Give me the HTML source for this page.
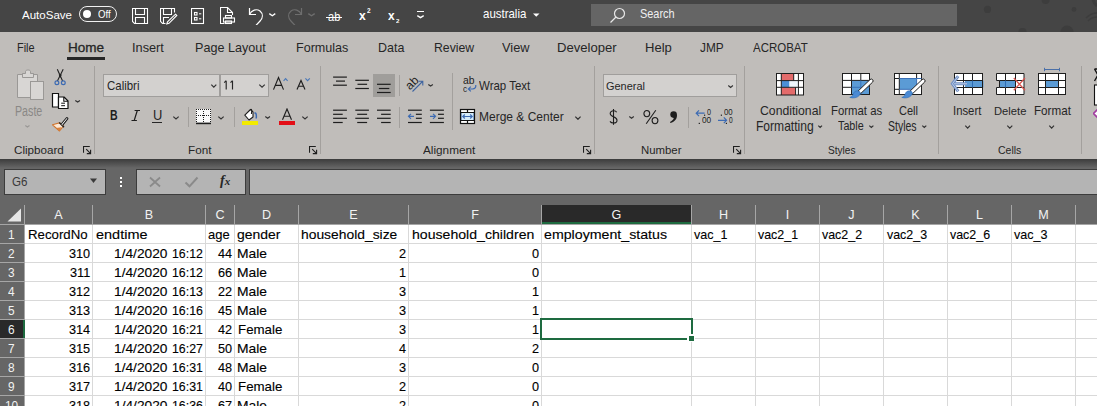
<!DOCTYPE html>
<html><head><meta charset="utf-8"><style>
html,body{margin:0;padding:0}
body{width:1097px;height:406px;overflow:hidden;position:relative;background:#666;font-family:"Liberation Sans", sans-serif}
.b{position:absolute}
.t{position:absolute;white-space:nowrap;line-height:1.15;transform-origin:0 0}
</style></head><body>
<div class="b" style="left:0px;top:0px;width:1097px;height:32px;background:#454545"></div>
<svg class="b" style="left:960px;top:0px;" width="137" height="32" viewBox="0 0 137 32"><g fill="#3d3d3d"><circle cx="27.5" cy="9.4" r="3.6"/><circle cx="85.6" cy="0" r="4"/><circle cx="114" cy="9.4" r="2.4"/>
<circle cx="107" cy="32" r="6.5"/><circle cx="62.5" cy="32" r="4"/></g>
<path d="M126,18C130,14 134,13 137,13M128,21C131,18 134,17 137,17" fill="none" stroke="#3d3d3d" stroke-width="1.5"/>
<path d="M133,0C134,3 136,5 137,6" fill="none" stroke="#3d3d3d" stroke-width="3"/></svg>
<div class="t" style="left:22.00px;top:9.58px;font-size:11.13px;line-height:11.13px;font-weight:normal;color:#ffffff;transform:scaleX(1.037);">AutoSave</div>
<div class="b" style="left:79px;top:6px;width:38px;height:16px;border:1.2px solid #f0f0f0;border-radius:9px;box-sizing:border-box"></div>
<div class="b" style="left:83px;top:10px;width:8px;height:8px;background:#fff;border-radius:50%"></div>
<div class="t" style="left:98.00px;top:9.49px;font-size:10.88px;line-height:10.88px;font-weight:normal;color:#ffffff;transform:scaleX(0.884);">Off</div>
<svg class="b" style="left:132px;top:8px;" width="17" height="17" viewBox="0 0 17 17"><g fill="none" stroke="#fff" stroke-width="1.1"><path d="M0.5,0.5H15.5V15.5H2.5L0.5,13.5Z"/><path d="M3.5,0.5V6.5H12.5V0.5"/><path d="M3.5,15.5V9.5H12.5V15.5"/></g></svg>
<svg class="b" style="left:160px;top:8px;" width="18" height="17" viewBox="0 0 18 17"><g fill="none" stroke="#fff" stroke-width="1.1"><path d="M14.5,4.5V0.5H0.5V13.5L2.5,15.5H5.5"/><path d="M3.5,0.5V6.5H11.5V0.5"/><path d="M3.5,15.5V9.5H9"/></g><path d="M15.5,6.2L16.8,7.5L9,15.3L6.8,16L7.5,13.8Z" fill="none" stroke="#fff" stroke-width="1.1"/></svg>
<svg class="b" style="left:191px;top:8px;" width="14" height="17" viewBox="0 0 14 17"><g fill="none" stroke="#fff" stroke-width="1.1"><rect x="0.5" y="0.5" width="12" height="15"/><rect x="3.5" y="4.5" width="2.5" height="2.5"/><rect x="3.5" y="9.5" width="2.5" height="2.5"/></g><rect x="8" y="5.3" width="2.3" height="1" fill="#fff"/><rect x="8" y="10.3" width="2.3" height="1" fill="#fff"/></svg>
<svg class="b" style="left:220px;top:7px;" width="17" height="18" viewBox="0 0 17 18"><g fill="none" stroke="#fff" stroke-width="1.1"><path d="M4.5,16.5H0.5V0.5H7.5L12.5,5.5V8"/><path d="M7.5,0.5V5.5H12.5"/><rect x="5.5" y="8.5" width="6" height="2.5"/><rect x="3.5" y="11" width="11" height="4"/><rect x="5.5" y="14" width="6" height="2.5"/></g></svg>
<svg class="b" style="left:247px;top:7px;" width="18" height="18" viewBox="0 0 18 18"><g fill="none" stroke="#fff" stroke-width="1.2"><path d="M2.5,1V7.5H9"/><path d="M2.6,7.3C4.5,3 9.5,1.5 13,4 C16.5,7 15.5,11 13.5,13.5L7.5,20"/></g></svg>
<svg class="b" style="left:268.4px;top:11.8px;" width="8.600000000000023" height="5.199999999999999" viewBox="0 0 8.600000000000023 5.199999999999999"><path d="M1.3,1.6L4.300000000000011,3.7999999999999994L7.300000000000023,1.6" fill="none" stroke="#fff" stroke-width="1.32"/></svg>
<svg class="b" style="left:287px;top:7px;" width="18" height="18" viewBox="0 0 18 18"><g fill="none" stroke="#6e6e6e" stroke-width="1.2" transform="translate(17,0) scale(-1,1)"><path d="M2.5,1V7.5H9"/><path d="M2.6,7.3C4.5,3 9.5,1.5 13,4 C16.5,7 15.5,11 13.5,13.5L7.5,20"/></g></svg>
<svg class="b" style="left:307px;top:11.8px;" width="9" height="5.199999999999999" viewBox="0 0 9 5.199999999999999"><path d="M1.3,1.6L4.5,3.7999999999999994L7.7,1.6" fill="none" stroke="#6e6e6e" stroke-width="1.32"/></svg>
<div class="t" style="left:327.70px;top:10.00px;font-size:13.20px;line-height:13.20px;font-weight:normal;color:#ffffff;transform:scaleX(0.840);">ab</div>
<div class="b" style="left:326px;top:17px;width:16px;height:1px;background:#fff"></div>
<div class="t" style="left:359.30px;top:8.80px;font-size:13.58px;line-height:13.58px;font-weight:bold;color:#ffffff;transform:scaleX(0.889);">x</div>
<div class="t" style="left:367.00px;top:7.81px;font-size:6.29px;line-height:6.29px;font-weight:bold;color:#ffffff;transform:scaleX(1.032);">2</div>
<div class="t" style="left:388.40px;top:8.80px;font-size:13.58px;line-height:13.58px;font-weight:bold;color:#ffffff;transform:scaleX(0.875);">x</div>
<div class="t" style="left:395.80px;top:19.47px;font-size:5.86px;line-height:5.86px;font-weight:bold;color:#ffffff;transform:scaleX(1.046);">2</div>
<div class="b" style="left:417px;top:11px;width:7px;height:1px;background:#fff"></div>
<svg class="b" style="left:416px;top:13.8px;" width="9" height="5.0" viewBox="0 0 9 5.0"><path d="M1.3,1.6L4.5,3.6L7.7,1.6" fill="none" stroke="#fff" stroke-width="1.32"/></svg>
<div class="t" style="left:483.20px;top:9.45px;font-size:11.97px;line-height:11.97px;font-weight:normal;color:#ffffff;transform:scaleX(0.958);">australia</div>
<svg class="b" style="left:533px;top:13px;" width="7" height="5" viewBox="0 0 7 5"><path d="M0,0.5H6.5L3.25,3.8Z" fill="#fff"/></svg>
<div class="b" style="left:591px;top:4px;width:366px;height:22px;background:#656565"></div>
<svg class="b" style="left:609px;top:7px;" width="17" height="17" viewBox="0 0 17 17"><g fill="none" stroke="#e8e8e8" stroke-width="1.2"><circle cx="10.5" cy="6.5" r="5"/><path d="M7,10L1.5,15.5"/></g></svg>
<div class="t" style="left:639.80px;top:9.45px;font-size:11.97px;line-height:11.97px;font-weight:normal;color:#f0f0f0;transform:scaleX(0.912);">Search</div>
<div class="b" style="left:0px;top:32px;width:1097px;height:127px;background:#c0bdba"></div>
<div class="t" style="left:16.60px;top:41.57px;font-size:12.80px;line-height:12.80px;font-weight:normal;color:#262626;transform:scaleX(0.854);">File</div>
<div class="t" style="left:67.60px;top:41.57px;font-size:12.80px;line-height:12.80px;font-weight:normal;color:#262626;transform:scaleX(1.056);-webkit-text-stroke:0.3px #262626">Home</div>
<div class="t" style="left:132.00px;top:41.57px;font-size:12.80px;line-height:12.80px;font-weight:normal;color:#262626;transform:scaleX(0.997);">Insert</div>
<div class="t" style="left:195.30px;top:41.57px;font-size:12.80px;line-height:12.80px;font-weight:normal;color:#262626;transform:scaleX(0.984);">Page Layout</div>
<div class="t" style="left:296.00px;top:41.57px;font-size:12.80px;line-height:12.80px;font-weight:normal;color:#262626;transform:scaleX(0.982);">Formulas</div>
<div class="t" style="left:378.30px;top:41.57px;font-size:12.80px;line-height:12.80px;font-weight:normal;color:#262626;transform:scaleX(0.975);">Data</div>
<div class="t" style="left:433.70px;top:41.57px;font-size:12.80px;line-height:12.80px;font-weight:normal;color:#262626;transform:scaleX(0.958);">Review</div>
<div class="t" style="left:501.50px;top:41.57px;font-size:12.80px;line-height:12.80px;font-weight:normal;color:#262626;transform:scaleX(0.999);">View</div>
<div class="t" style="left:557.00px;top:41.57px;font-size:12.80px;line-height:12.80px;font-weight:normal;color:#262626;transform:scaleX(1.023);">Developer</div>
<div class="t" style="left:645.00px;top:41.57px;font-size:12.80px;line-height:12.80px;font-weight:normal;color:#262626;transform:scaleX(1.019);">Help</div>
<div class="t" style="left:699.80px;top:41.57px;font-size:12.80px;line-height:12.80px;font-weight:normal;color:#262626;transform:scaleX(0.926);">JMP</div>
<div class="t" style="left:753.00px;top:41.57px;font-size:12.80px;line-height:12.80px;font-weight:normal;color:#262626;transform:scaleX(0.898);">ACROBAT</div>
<div class="b" style="left:67px;top:57px;width:38px;height:3px;background:#262626"></div>
<div class="b" style="left:94px;top:66px;width:1px;height:88px;background:#a3a09d"></div>
<div class="b" style="left:320px;top:66px;width:1px;height:88px;background:#a3a09d"></div>
<div class="b" style="left:594px;top:66px;width:1px;height:88px;background:#a3a09d"></div>
<div class="b" style="left:744px;top:66px;width:1px;height:88px;background:#a3a09d"></div>
<div class="b" style="left:938px;top:66px;width:1px;height:88px;background:#a3a09d"></div>
<div class="b" style="left:1081px;top:66px;width:1px;height:88px;background:#a3a09d"></div>
<div class="t" style="left:13.60px;top:144.56px;font-size:11.40px;line-height:11.40px;font-weight:normal;color:#262626;transform:scaleX(1.021);">Clipboard</div>
<svg class="b" style="left:83px;top:146px;" width="10" height="10" viewBox="0 0 10 10"><g fill="none" stroke="#1e1e1e" stroke-width="1.1"><path d="M0.5,6.8V0.5H6.8"/><path d="M3.2,3.2L7.4,7.4M7.6,3.8V7.6H3.8"/></g></svg>
<div class="t" style="left:187.60px;top:144.56px;font-size:11.40px;line-height:11.40px;font-weight:normal;color:#262626;transform:scaleX(1.026);">Font</div>
<svg class="b" style="left:309px;top:146px;" width="10" height="10" viewBox="0 0 10 10"><g fill="none" stroke="#1e1e1e" stroke-width="1.1"><path d="M0.5,6.8V0.5H6.8"/><path d="M3.2,3.2L7.4,7.4M7.6,3.8V7.6H3.8"/></g></svg>
<div class="t" style="left:423.40px;top:144.56px;font-size:11.40px;line-height:11.40px;font-weight:normal;color:#262626;transform:scaleX(1.032);">Alignment</div>
<svg class="b" style="left:583px;top:146px;" width="10" height="10" viewBox="0 0 10 10"><g fill="none" stroke="#1e1e1e" stroke-width="1.1"><path d="M0.5,6.8V0.5H6.8"/><path d="M3.2,3.2L7.4,7.4M7.6,3.8V7.6H3.8"/></g></svg>
<div class="t" style="left:641.40px;top:144.56px;font-size:11.40px;line-height:11.40px;font-weight:normal;color:#262626;transform:scaleX(0.999);">Number</div>
<svg class="b" style="left:733px;top:146px;" width="10" height="10" viewBox="0 0 10 10"><g fill="none" stroke="#1e1e1e" stroke-width="1.1"><path d="M0.5,6.8V0.5H6.8"/><path d="M3.2,3.2L7.4,7.4M7.6,3.8V7.6H3.8"/></g></svg>
<div class="t" style="left:827.70px;top:144.56px;font-size:11.40px;line-height:11.40px;font-weight:normal;color:#262626;transform:scaleX(0.888);">Styles</div>
<div class="t" style="left:998.30px;top:144.56px;font-size:11.40px;line-height:11.40px;font-weight:normal;color:#262626;transform:scaleX(0.923);">Cells</div>
<svg class="b" style="left:16px;top:69px;" width="30" height="32" viewBox="0 0 30 32"><g stroke="#9a9896" stroke-width="1" fill="#d8d6d4">
<path d="M1.5,5.5H6.5V4.5H17.5V5.5H21.5V28.5H1.5Z"/>
<path d="M6.5,8.5V4.5H9.5V2.5C9.5,0.5 14.5,0.5 14.5,2.5V4.5H17.5V8.5Z"/>
<rect x="14.5" y="12.5" width="13" height="18"/></g></svg>
<div class="t" style="left:14.60px;top:104.86px;font-size:13.71px;line-height:13.71px;font-weight:normal;color:#8a8886;transform:scaleX(0.779);">Paste</div>
<svg class="b" style="left:24.2px;top:124px;" width="6.800000000000001" height="4.400000000000006" viewBox="0 0 6.800000000000001 4.400000000000006"><path d="M1.3,1.6L3.4000000000000004,3.0000000000000058L5.500000000000001,1.6" fill="none" stroke="#9a9896" stroke-width="1.21"/></svg>
<svg class="b" style="left:54px;top:68px;" width="13" height="18" viewBox="0 0 13 18"><g fill="none" stroke-width="1.1"><path d="M3.3,1.2L8.6,13M9.2,1.2L3.4,13" stroke="#222"/>
<circle cx="2.9" cy="14.8" r="1.9" stroke="#3d6bb3" stroke-width="1.2"/><circle cx="9.3" cy="14.8" r="1.9" stroke="#3d6bb3" stroke-width="1.2"/></g>
<path d="M5.2,6.5L6.25,8.6L7.3,6.5" stroke="#222" stroke-width="1.2" fill="none"/></svg>
<svg class="b" style="left:51px;top:92px;" width="19" height="18" viewBox="0 0 19 18"><path d="M1.5,1.5H7.5V15H1.5Z" fill="#fff" stroke="#111" stroke-width="1.2"/>
<path d="M7.5,5H13L17,9V16.5H7.5Z" fill="#fff" stroke="#111" stroke-width="1.2" stroke-linejoin="round"/>
<path d="M12.8,5V9.2H17" fill="none" stroke="#111" stroke-width="1.1"/>
<path d="M10.2,11.2H14M10.2,13.7H14" stroke="#111" stroke-width="1"/></svg>
<svg class="b" style="left:74px;top:99.2px;" width="7.299999999999997" height="4.5" viewBox="0 0 7.299999999999997 4.5"><path d="M1.3,1.6L3.6499999999999986,3.1L5.999999999999997,1.6" fill="none" stroke="#333" stroke-width="1.21"/></svg>
<svg class="b" style="left:51px;top:115px;" width="18" height="18" viewBox="0 0 18 18"><path d="M1.5,9.8L8.8,7.8L12.5,11L8.5,16Z" fill="#fde9d6" stroke="#d0742c" stroke-width="1.1" stroke-linejoin="round"/>
<path d="M5,13L10.5,12.2L8.5,16Z" fill="#d8803c"/>
<path d="M8.2,7.6L13,12.2" stroke="#222" stroke-width="1.4"/>
<path d="M10.2,9L15.2,3C16,2 17.5,3.2 16.6,4.2L11.6,10.4" fill="#fff" stroke="#1e1e1e" stroke-width="1.1"/></svg>
<div class="b" style="left:103px;top:74px;width:117px;height:23px;background:#d3d1cf;border:1px solid #a09e9c;box-sizing:border-box"></div>
<div class="b" style="left:220px;top:74px;width:49px;height:23px;background:#d3d1cf;border:1px solid #a09e9c;box-sizing:border-box"></div>
<div class="t" style="left:107.00px;top:79.90px;font-size:12.38px;line-height:12.38px;font-weight:normal;color:#262626;transform:scaleX(0.926);">Calibri</div>
<svg class="b" style="left:209.7px;top:83px;" width="7.600000000000023" height="5.599999999999994" viewBox="0 0 7.600000000000023 5.599999999999994"><path d="M1.3,1.6L3.8000000000000114,4.199999999999994L6.300000000000023,1.6" fill="none" stroke="#333" stroke-width="1.21"/></svg>
<svg class="b" style="left:222px;top:79px;" width="14" height="12" viewBox="0 0 14 12"><path d="M4.2,1.7V10.6M2.2,3.6L4.2,1.7M10.5,1.7V10.6M8.5,3.6L10.5,1.7" fill="none" stroke="#262626" stroke-width="1.15"/></svg>
<svg class="b" style="left:258.4px;top:83px;" width="8.100000000000023" height="5.599999999999994" viewBox="0 0 8.100000000000023 5.599999999999994"><path d="M1.3,1.6L4.050000000000011,4.199999999999994L6.800000000000023,1.6" fill="none" stroke="#333" stroke-width="1.21"/></svg>
<svg class="b" style="left:270px;top:74px;" width="44" height="18" viewBox="0 0 44 18"><g fill="none" stroke="#1e1e1e" stroke-width="1.15" stroke-linejoin="miter">
<path d="M3.5,15.6L8.5,3.6L13.5,15.6M5.3,11.4H11.7"/><path d="M27,15.6L31,6.4L35,15.6M28.4,12.2H33.6"/></g>
<path d="M13.6,6.8L15.6,4.6L17.6,6.8" fill="none" stroke="#4a78b8" stroke-width="1.1"/>
<path d="M35.4,4.4L37.6,6.6L39.8,4.4" fill="none" stroke="#4a78b8" stroke-width="1.1"/></svg>
<div class="t" style="left:110.40px;top:108.72px;font-size:13.91px;line-height:13.91px;font-weight:bold;color:#1e1e1e;transform:scaleX(0.759);">B</div>
<svg class="b" style="left:130px;top:109px;" width="11" height="13" viewBox="0 0 11 13"><path d="M4.6,1.5H10M1.5,11.5H6.9M7.3,1.5L4.2,11.5" fill="none" stroke="#1e1e1e" stroke-width="1.2"/></svg>
<div class="t" style="left:152.50px;top:108.76px;font-size:13.71px;line-height:13.71px;font-weight:normal;color:#262626;transform:scaleX(0.942);">U</div>
<div class="b" style="left:152px;top:122px;width:10px;height:1px;background:#262626"></div>
<svg class="b" style="left:171.6px;top:114.7px;" width="8.0" height="5.3999999999999915" viewBox="0 0 8.0 5.3999999999999915"><path d="M1.3,1.6L4.0,3.9999999999999916L6.7,1.6" fill="none" stroke="#333" stroke-width="1.21"/></svg>
<div class="b" style="left:188px;top:107px;width:1px;height:20px;background:#a3a09d"></div>
<svg class="b" style="left:195px;top:108px;" width="17" height="17" viewBox="0 0 17 17"><rect x="1" y="1" width="15" height="14" fill="#fafafa"/><g fill="#1e1e1e"><rect x="1" y="1" width="1" height="1"/><rect x="1" y="7" width="1" height="1"/><rect x="3" y="1" width="1" height="1"/><rect x="3" y="7" width="1" height="1"/><rect x="5" y="1" width="1" height="1"/><rect x="5" y="7" width="1" height="1"/><rect x="7" y="1" width="1" height="1"/><rect x="7" y="7" width="1" height="1"/><rect x="9" y="1" width="1" height="1"/><rect x="9" y="7" width="1" height="1"/><rect x="11" y="1" width="1" height="1"/><rect x="11" y="7" width="1" height="1"/><rect x="13" y="1" width="1" height="1"/><rect x="13" y="7" width="1" height="1"/><rect x="15" y="1" width="1" height="1"/><rect x="15" y="7" width="1" height="1"/><rect x="1" y="3" width="1" height="1"/><rect x="15" y="3" width="1" height="1"/><rect x="8" y="3" width="1" height="1"/><rect x="1" y="5" width="1" height="1"/><rect x="15" y="5" width="1" height="1"/><rect x="8" y="5" width="1" height="1"/><rect x="1" y="7" width="1" height="1"/><rect x="15" y="7" width="1" height="1"/><rect x="8" y="7" width="1" height="1"/><rect x="1" y="9" width="1" height="1"/><rect x="15" y="9" width="1" height="1"/><rect x="8" y="9" width="1" height="1"/><rect x="1" y="11" width="1" height="1"/><rect x="15" y="11" width="1" height="1"/><rect x="8" y="11" width="1" height="1"/><rect x="1" y="13" width="1" height="1"/><rect x="15" y="13" width="1" height="1"/><rect x="8" y="13" width="1" height="1"/></g>
<rect x="1" y="14.6" width="15" height="1.6" fill="#1e1e1e"/></svg>
<svg class="b" style="left:217.3px;top:114.7px;" width="8.0" height="5.3999999999999915" viewBox="0 0 8.0 5.3999999999999915"><path d="M1.3,1.6L4.0,3.9999999999999916L6.7,1.6" fill="none" stroke="#333" stroke-width="1.21"/></svg>
<div class="b" style="left:234px;top:107px;width:1px;height:20px;background:#a3a09d"></div>
<svg class="b" style="left:242px;top:107px;" width="17" height="14" viewBox="0 0 17 14"><path d="M2.8,8.2L8.5,2.5L11,5L11,10L7,13L2.8,8.2Z" fill="#fff" stroke="#1e1e1e" stroke-width="1.1" stroke-linejoin="round"/>
<path d="M8.3,2.8C9.2,1.8 10.3,2.4 9.4,7" fill="none" stroke="#1e1e1e" stroke-width="1.1"/>
<path d="M12.5,6.5C13.5,5.2 14.8,6.4 14.2,11.5" fill="none" stroke="#3d6bb3" stroke-width="1.5"/></svg>
<div class="b" style="left:242px;top:120.8px;width:16px;height:4.2px;background:#f2ea00"></div>
<svg class="b" style="left:263.9px;top:114.8px;" width="7.300000000000011" height="4.700000000000003" viewBox="0 0 7.300000000000011 4.700000000000003"><path d="M1.3,1.6L3.6500000000000057,3.300000000000003L6.0000000000000115,1.6" fill="none" stroke="#333" stroke-width="1.21"/></svg>
<svg class="b" style="left:280px;top:108px;" width="14" height="13" viewBox="0 0 14 13"><path d="M2.5,11.8L7,1L11.5,11.8M4.2,8.2H9.8" fill="none" stroke="#1e1e1e" stroke-width="1.15"/></svg>
<div class="b" style="left:279px;top:121px;width:16px;height:3.8px;background:#e30f17"></div>
<svg class="b" style="left:300.6px;top:114.7px;" width="8.0" height="5.3999999999999915" viewBox="0 0 8.0 5.3999999999999915"><path d="M1.3,1.6L4.0,3.9999999999999916L6.7,1.6" fill="none" stroke="#333" stroke-width="1.21"/></svg>
<div class="b" style="left:373px;top:74px;width:22px;height:23px;background:#a09e9b"></div>
<svg class="b" style="left:0px;top:0px;pointer-events:none" width="1097" height="160" viewBox="0 0 1097 160"><rect x="333.10" y="76.50" width="13.80" height="1.2" fill="#1e1e1e"/><rect x="336.00" y="80.50" width="9.00" height="1.2" fill="#1e1e1e"/><rect x="333.10" y="84.60" width="13.80" height="1.2" fill="#1e1e1e"/><rect x="355.30" y="79.70" width="13.60" height="1.2" fill="#1e1e1e"/><rect x="357.50" y="83.70" width="9.60" height="1.2" fill="#1e1e1e"/><rect x="355.30" y="87.90" width="13.60" height="1.2" fill="#1e1e1e"/><rect x="377.00" y="83.70" width="13.70" height="1.2" fill="#1e1e1e"/><rect x="378.90" y="87.90" width="10.40" height="1.2" fill="#1e1e1e"/><rect x="377.00" y="91.90" width="13.70" height="1.2" fill="#1e1e1e"/><rect x="333.10" y="109.60" width="13.80" height="1.2" fill="#1e1e1e"/><rect x="333.10" y="113.70" width="9.60" height="1.2" fill="#1e1e1e"/><rect x="333.10" y="117.70" width="13.80" height="1.2" fill="#1e1e1e"/><rect x="333.10" y="121.90" width="9.60" height="1.2" fill="#1e1e1e"/><rect x="355.30" y="109.60" width="13.60" height="1.2" fill="#1e1e1e"/><rect x="357.20" y="113.70" width="9.90" height="1.2" fill="#1e1e1e"/><rect x="355.30" y="117.70" width="13.60" height="1.2" fill="#1e1e1e"/><rect x="357.20" y="121.90" width="9.90" height="1.2" fill="#1e1e1e"/><rect x="377.00" y="109.60" width="13.70" height="1.2" fill="#1e1e1e"/><rect x="381.10" y="113.70" width="9.60" height="1.2" fill="#1e1e1e"/><rect x="377.00" y="117.70" width="13.70" height="1.2" fill="#1e1e1e"/><rect x="381.10" y="121.90" width="9.60" height="1.2" fill="#1e1e1e"/><rect x="408.00" y="109.60" width="13.80" height="1.2" fill="#1e1e1e"/><rect x="415.90" y="113.70" width="5.90" height="1.2" fill="#1e1e1e"/><rect x="415.90" y="117.70" width="5.90" height="1.2" fill="#1e1e1e"/><rect x="408.00" y="121.90" width="13.80" height="1.2" fill="#1e1e1e"/><rect x="429.90" y="109.60" width="14.00" height="1.2" fill="#1e1e1e"/><rect x="438.00" y="113.70" width="5.90" height="1.2" fill="#1e1e1e"/><rect x="438.00" y="117.70" width="5.90" height="1.2" fill="#1e1e1e"/><rect x="429.90" y="121.90" width="14.00" height="1.2" fill="#1e1e1e"/><path d="M408.5,116.3H414M411,113.8L408.5,116.3L411,118.8" fill="none" stroke="#3d6bb3" stroke-width="1.2"/><path d="M430,116.3H435.5M433,113.8L435.5,116.3L433,118.8" fill="none" stroke="#3d6bb3" stroke-width="1.2"/><path d="M412.5,91.5L422.5,81.5M418.6,81.2H422.8V85.4" fill="none" stroke="#3e64a0" stroke-width="1.1"/></svg>
<div class="b" style="left:399px;top:75px;width:1px;height:21px;background:#a3a09d"></div>
<div class="b" style="left:399px;top:107px;width:1px;height:21px;background:#a3a09d"></div>
<div class="t" style="left:405.3px;top:76.8px;width:14px;text-align:center;font-size:12px;line-height:12px;color:#1e1e1e;transform:rotate(-45deg);transform-origin:50% 50%">ab</div>
<svg class="b" style="left:427px;top:83px;" width="7.199999999999989" height="4.5" viewBox="0 0 7.199999999999989 4.5"><path d="M1.3,1.6L3.5999999999999943,3.1L5.899999999999989,1.6" fill="none" stroke="#333" stroke-width="1.21"/></svg>
<div class="b" style="left:452px;top:73px;width:1px;height:57px;background:#a3a09d"></div>
<div class="t" style="left:462.70px;top:76.37px;font-size:10.20px;line-height:10.20px;font-weight:normal;color:#1e1e1e;transform:scaleX(1.015);">ab</div>
<div class="t" style="left:462.70px;top:83.96px;font-size:9.64px;line-height:9.64px;font-weight:normal;color:#1e1e1e;transform:scaleX(0.851);">c</div>
<svg class="b" style="left:467px;top:84px;" width="10" height="9" viewBox="0 0 10 9"><path d="M8.8,1C9,3.5 8,5 5.5,5H1.5M3.8,2.6L1.3,5L3.8,7.4" fill="none" stroke="#3d6bb3" stroke-width="1.2"/></svg>
<div class="t" style="left:479.40px;top:80.08px;font-size:12.33px;line-height:12.33px;font-weight:normal;color:#262626;transform:scaleX(0.932);">Wrap Text</div>
<svg class="b" style="left:459px;top:108px;" width="17" height="17" viewBox="0 0 17 17"><rect x="1.5" y="1.5" width="14" height="14" fill="#fff"/>
<rect x="2" y="4.5" width="13" height="8" fill="#d6ecfa"/>
<path d="M2,4.5V12.5M15,4.5V12.5" stroke="#3d6bb3" stroke-width="1"/>
<g fill="none" stroke="#111" stroke-width="1.2"><rect x="1.5" y="1.5" width="14" height="14"/><path d="M1.5,4.5H15.5M1.5,12.5H15.5M8.5,1.5V4.5M8.5,12.5V15.5"/></g>
<path d="M3.8,8.5H13.2M5.8,6.5L3.8,8.5L5.8,10.5M11.2,6.5L13.2,8.5L11.2,10.5" fill="none" stroke="#3d6bb3" stroke-width="1.2"/></svg>
<div class="t" style="left:479.40px;top:111.20px;font-size:12.97px;line-height:12.97px;font-weight:normal;color:#262626;transform:scaleX(0.925);">Merge & Center</div>
<svg class="b" style="left:573.5px;top:114.6px;" width="7.899999999999977" height="5.700000000000003" viewBox="0 0 7.899999999999977 5.700000000000003"><path d="M1.3,1.6L3.9499999999999886,4.3000000000000025L6.599999999999977,1.6" fill="none" stroke="#333" stroke-width="1.21"/></svg>
<div class="b" style="left:603px;top:74px;width:134px;height:23px;background:#d3d1cf;border:1px solid #a09e9c;box-sizing:border-box"></div>
<div class="t" style="left:606.40px;top:80.29px;font-size:11.70px;line-height:11.70px;font-weight:normal;color:#262626;transform:scaleX(0.936);">General</div>
<svg class="b" style="left:726.9px;top:83.9px;" width="7.2000000000000455" height="4.799999999999997" viewBox="0 0 7.2000000000000455 4.799999999999997"><path d="M1.3,1.6L3.6000000000000227,3.3999999999999972L5.900000000000046,1.6" fill="none" stroke="#333" stroke-width="1.21"/></svg>
<svg class="b" style="left:604px;top:104px;" width="80" height="24" viewBox="0 0 80 24"><g fill="none" stroke="#1e1e1e" stroke-width="1.1">
<path d="M12.6,8.2C12.2,7.2 11,6.8 9.6,6.8C7.4,6.8 6.2,8 6.2,9.6C6.2,13.2 13,12.4 13,16.2C13,18 11.6,19 9.6,19C8,19 6.6,18.4 6,17.4"/>
<path d="M9.5,5V20.8"/>
<ellipse cx="42.8" cy="9.6" rx="2.9" ry="3.1"/><ellipse cx="51" cy="16.6" rx="2.9" ry="3.1"/><path d="M51.8,6.2L42.2,19.8"/>
</g>
<circle cx="69.6" cy="10.6" r="3.3" fill="#1e1e1e"/><path d="M72.8,10.4C73.4,14.5 71,17.6 66.4,18.9L66,18C68.8,16.6 70.4,14.6 70,11.8Z" fill="#1e1e1e"/></svg>
<svg class="b" style="left:628px;top:115.1px;" width="7.100000000000023" height="4.6000000000000085" viewBox="0 0 7.100000000000023 4.6000000000000085"><path d="M1.3,1.6L3.5500000000000114,3.2000000000000086L5.800000000000023,1.6" fill="none" stroke="#333" stroke-width="1.21"/></svg>
<div class="b" style="left:688px;top:107px;width:1px;height:21px;background:#a3a09d"></div>
<div class="t" style="left:707.00px;top:108.08px;font-size:9.15px;line-height:9.15px;font-weight:normal;color:#1e1e1e;transform:scaleX(0.787);">0</div>
<div class="t" style="left:701.80px;top:116.38px;font-size:9.15px;line-height:9.15px;font-weight:normal;color:#1e1e1e;transform:scaleX(0.905);">00</div>
<div class="t" style="left:724.30px;top:108.08px;font-size:9.15px;line-height:9.15px;font-weight:normal;color:#1e1e1e;transform:scaleX(0.856);">00</div>
<div class="t" style="left:729.30px;top:116.38px;font-size:9.15px;line-height:9.15px;font-weight:normal;color:#1e1e1e;transform:scaleX(0.728);">0</div>
<svg class="b" style="left:690px;top:104px;" width="50" height="24" viewBox="0 0 50 24"><g fill="#1e1e1e"><rect x="14" y="10.6" width="1.2" height="1.2"/><rect x="8.7" y="18.8" width="1.2" height="1.2"/>
<rect x="30.8" y="10.6" width="1.2" height="1.2"/><rect x="35.8" y="18.8" width="1.2" height="1.2"/></g>
<path d="M6.2,9.2H14.6M9,6.3L6.2,9.2L9,12.1" fill="none" stroke="#3d6bb3" stroke-width="1.2"/>
<path d="M28,16.3H36.6M33.8,13.4L36.6,16.3L33.8,19.2" fill="none" stroke="#3d6bb3" stroke-width="1.2"/></svg>
<svg class="b" style="left:772px;top:68px;" width="36" height="32" viewBox="0 0 36 32"><rect x="4.5" y="5.5" width="27" height="21.5" fill="#fff"/>
<rect x="9.3" y="5.5" width="12.4" height="7.1" fill="#e36b6b"/>
<rect x="9.3" y="19.3" width="14.3" height="7.7" fill="#e36b6b"/>
<rect x="9.3" y="12.6" width="8.2" height="6.7" fill="#4b8fd6"/>
<rect x="17.5" y="12.6" width="8.9" height="6.7" fill="#eef6fc"/>
<g fill="none" stroke="#1e1e1e" stroke-width="1"><rect x="4.5" y="5.5" width="27" height="21.5"/>
<path d="M9.3,5.5V27M26.4,5.5V27M21.7,5.5V12.6M23.6,19.3V27M4.5,12.6H31.5M4.5,19.3H31.5"/></g></svg>
<svg class="b" style="left:838px;top:68px;" width="40" height="36" viewBox="0 0 40 36"><rect x="4.5" y="5.5" width="27" height="21" fill="#fff"/>
<rect x="13.5" y="12.4" width="18" height="14.1" fill="#5b9bd5"/>
<g fill="none" stroke="#1e1e1e" stroke-width="1"><rect x="4.5" y="5.5" width="27" height="21"/>
<path d="M13.5,5.5V26.5M22.8,5.5V12.4M4.5,12.4H31.5M4.5,19.3H13.5"/></g>
<path d="M22.8,12.4V26.5M13.5,19.3H31.5" stroke="#3a74b8" stroke-width="1"/><path d="M20.05,23.1L32.05,11.6A1.8,1.8 0 0 1 34.55,14.2L22.55,25.7Z" fill="#fff" stroke="#1e1e1e" stroke-width="1"/>
<path d="M19.6,22.8C17.2,22.6 15.6,24.4 15,26.4C14.5,28 13.4,29 11.8,29.4C15,30.6 19.2,29.8 21.2,27.6C22.8,26 22.6,24.2 21.6,23.6Z" fill="#4a8ad4" stroke="#2f6db5" stroke-width="0.6"/></svg>
<svg class="b" style="left:890px;top:68px;" width="40" height="36" viewBox="0 0 40 36"><rect x="4.5" y="5.5" width="27" height="21" fill="#fff"/>
<rect x="9.3" y="10.5" width="17.3" height="10.8" fill="#5b9bd5"/>
<g fill="none" stroke="#1e1e1e" stroke-width="1"><rect x="4.5" y="5.5" width="27" height="21"/>
<path d="M9.3,5.5V26.5M26.6,5.5V10.5M4.5,10.5H9.3M4.5,21.3H9.3"/></g>
<path d="M9.3,10.5H31.5M9.3,21.3H26.6M26.6,10.5V21.3" stroke="#3a6fb6" stroke-width="1"/><path d="M20.05,23.1L32.05,11.6A1.8,1.8 0 0 1 34.55,14.2L22.55,25.7Z" fill="#fff" stroke="#1e1e1e" stroke-width="1"/>
<path d="M19.6,22.8C17.2,22.6 15.6,24.4 15,26.4C14.5,28 13.4,29 11.8,29.4C15,30.6 19.2,29.8 21.2,27.6C22.8,26 22.6,24.2 21.6,23.6Z" fill="#4a8ad4" stroke="#2f6db5" stroke-width="0.6"/></svg>
<div class="t" style="left:759.50px;top:105.00px;font-size:12.38px;line-height:12.38px;font-weight:normal;color:#262626;transform:scaleX(0.988);">Conditional</div>
<div class="t" style="left:755.50px;top:120.31px;font-size:13.90px;line-height:13.90px;font-weight:normal;color:#262626;transform:scaleX(0.868);">Formatting</div>
<svg class="b" style="left:817.4px;top:124.1px;" width="6.300000000000068" height="4.900000000000006" viewBox="0 0 6.300000000000068 4.900000000000006"><path d="M1.3,1.6L3.150000000000034,3.5000000000000058L5.000000000000068,1.6" fill="none" stroke="#333" stroke-width="1.21"/></svg>
<div class="t" style="left:830.50px;top:104.47px;font-size:13.00px;line-height:13.00px;font-weight:normal;color:#262626;transform:scaleX(0.874);">Format as</div>
<div class="t" style="left:838.30px;top:120.49px;font-size:12.52px;line-height:12.52px;font-weight:normal;color:#262626;transform:scaleX(0.859);">Table</div>
<svg class="b" style="left:867.6px;top:124.1px;" width="6.699999999999932" height="4.900000000000006" viewBox="0 0 6.699999999999932 4.900000000000006"><path d="M1.3,1.6L3.349999999999966,3.5000000000000058L5.399999999999932,1.6" fill="none" stroke="#333" stroke-width="1.21"/></svg>
<div class="t" style="left:898.60px;top:105.00px;font-size:12.38px;line-height:12.38px;font-weight:normal;color:#262626;transform:scaleX(0.890);">Cell</div>
<div class="t" style="left:887.70px;top:120.31px;font-size:13.90px;line-height:13.90px;font-weight:normal;color:#262626;transform:scaleX(0.755);">Styles</div>
<svg class="b" style="left:920.5px;top:124.1px;" width="6.600000000000023" height="4.900000000000006" viewBox="0 0 6.600000000000023 4.900000000000006"><path d="M1.3,1.6L3.3000000000000114,3.5000000000000058L5.300000000000023,1.6" fill="none" stroke="#333" stroke-width="1.21"/></svg>
<svg class="b" style="left:946px;top:68px;" width="40" height="30" viewBox="0 0 40 30"><rect x="8.5" y="5.5" width="28" height="21" fill="#fff"/>
<rect x="19" y="12.5" width="18.5" height="7" fill="#5b9bd5"/>
<g fill="none" stroke="#1e1e1e" stroke-width="1"><rect x="8.5" y="5.5" width="28" height="21"/><path d="M17.5,5.5V26.5M26.5,5.5V26.5M8.5,12.5H36.5M8.5,19.5H36.5"/></g>
<path d="M26.5,12.5V19.5" stroke="#2f6db5"/>
<path d="M21,15.8H8M12.2,8.2L6.4,15.8L12.2,23.4" fill="none" stroke="#6f8fc4" stroke-width="3" stroke-linejoin="miter"/><path d="M21,15.8H8M12.2,8.2L6.4,15.8L12.2,23.4" fill="none" stroke="#c6d3ea" stroke-width="0.9"/></svg>
<svg class="b" style="left:990px;top:68px;" width="40" height="30" viewBox="0 0 40 30"><rect x="6.5" y="5.5" width="27.5" height="21" fill="#fff"/>
<rect x="9.5" y="12.5" width="16" height="7" fill="#5b9bd5"/><rect x="6" y="13" width="3" height="6" fill="#c0bdba"/>
<g fill="none" stroke="#1e1e1e" stroke-width="1"><path d="M6.5,12.5V5.5H34V26.5H6.5V19.5M6.5,12.5H9.5V19.5H6.5M15.5,5.5V12.5M15.5,19.5V26.5M25.5,5.5V26.5M9.5,12.5H34M9.5,19.5H34"/></g>
<path d="M15.5,12.5V19.5" stroke="#2f6db5"/>
<path d="M23.8,10L35,22.3M35,10L23.8,22.3" stroke="#d9544f" stroke-width="1.3"/></svg>
<svg class="b" style="left:1034px;top:66px;" width="36" height="32" viewBox="0 0 36 32"><rect x="4.5" y="7.5" width="27" height="21" fill="#fff"/>
<rect x="12" y="14.5" width="12.5" height="7" fill="#5b9bd5"/>
<g fill="none" stroke="#1e1e1e" stroke-width="1"><rect x="4.5" y="7.5" width="27" height="21"/><path d="M11.5,7.5V28.5M24.5,7.5V28.5M4.5,14.5H31.5M4.5,21.5H31.5"/></g>
<path d="M10,3.5H26M10.5,1.8V5.2M25.5,1.8V5.2" stroke="#4a6fa8" stroke-width="1"/></svg>
<div class="t" style="left:953.40px;top:104.68px;font-size:12.29px;line-height:12.29px;font-weight:normal;color:#262626;transform:scaleX(0.921);">Insert</div>
<div class="t" style="left:993.60px;top:105.19px;font-size:11.70px;line-height:11.70px;font-weight:normal;color:#262626;transform:scaleX(0.958);">Delete</div>
<div class="t" style="left:1033.90px;top:104.68px;font-size:12.29px;line-height:12.29px;font-weight:normal;color:#262626;transform:scaleX(0.949);">Format</div>
<svg class="b" style="left:963.9px;top:123.6px;" width="7.300000000000068" height="5.5" viewBox="0 0 7.300000000000068 5.5"><path d="M1.3,1.6L3.650000000000034,4.1L6.000000000000068,1.6" fill="none" stroke="#333" stroke-width="1.21"/></svg>
<svg class="b" style="left:1005.8px;top:123.6px;" width="7.600000000000023" height="5.5" viewBox="0 0 7.600000000000023 5.5"><path d="M1.3,1.6L3.8000000000000114,4.1L6.300000000000023,1.6" fill="none" stroke="#333" stroke-width="1.21"/></svg>
<svg class="b" style="left:1048px;top:123.6px;" width="7.2999999999999545" height="5.5" viewBox="0 0 7.2999999999999545 5.5"><path d="M1.3,1.6L3.6499999999999773,4.1L5.999999999999955,1.6" fill="none" stroke="#333" stroke-width="1.21"/></svg>
<svg class="b" style="left:1093px;top:66px;" width="4" height="60" viewBox="0 0 4 60"><path d="M1.5,3H6M1.5,3L5,9L1.5,15" fill="none" stroke="#111" stroke-width="1.4"/>
<rect x="1.5" y="19" width="10" height="20" fill="#fff" stroke="#111" stroke-width="1.1"/>
<path d="M0.5,47.5L5,43L9,47.5L5,52Z" fill="#fff" stroke="#a33ea1" stroke-width="1.6"/></svg>
<div class="b" style="left:0px;top:159px;width:1097px;height:247px;background:#666666"></div>
<div class="b" style="left:0px;top:159px;width:1097px;height:9px;background:linear-gradient(#3c3c3c,#666666)"></div>
<div class="b" style="left:4px;top:169px;width:102px;height:26px;background:#b4b4b4;border:1px solid #3c3c3c;box-sizing:border-box"></div>
<div class="t" style="left:11.50px;top:176.47px;font-size:12.54px;line-height:12.54px;font-weight:normal;color:#3a3a3a;transform:scaleX(0.926);">G6</div>
<svg class="b" style="left:90px;top:178px;" width="8" height="6" viewBox="0 0 8 6"><path d="M0,0.5H7L3.5,5Z" fill="#3a3a3a"/></svg>
<div class="b" style="left:120px;top:177px;width:2px;height:2px;background:#fff"></div>
<div class="b" style="left:120px;top:181px;width:2px;height:2px;background:#fff"></div>
<div class="b" style="left:120px;top:185px;width:2px;height:2px;background:#fff"></div>
<div class="b" style="left:136px;top:169px;width:110px;height:26px;background:#b4b4b4;border:1px solid #3c3c3c;box-sizing:border-box"></div>
<div class="b" style="left:249px;top:169px;width:850px;height:26px;background:#b4b4b4;border:1px solid #3c3c3c;box-sizing:border-box"></div>
<svg class="b" style="left:148px;top:176px;" width="14" height="12" viewBox="0 0 14 12"><path d="M2,1.5L12,10.5M12,1.5L2,10.5" stroke="#8a8a8a" stroke-width="1.8"/></svg>
<svg class="b" style="left:184px;top:176px;" width="15" height="12" viewBox="0 0 15 12"><path d="M1.5,6.5L5.5,10.3L13.5,1.5" fill="none" stroke="#8a8a8a" stroke-width="2"/></svg>
<div class="t" style="left:220px;top:174px;font-size:14px;line-height:14px;font-style:italic;font-weight:bold;color:#262626;font-family:'Liberation Serif'">f<span style="font-size:11px">x</span></div>
<div class="b" style="left:0px;top:205px;width:1097px;height:20px;background:#666666"></div>
<div class="b" style="left:25px;top:225px;width:1072px;height:181px;background:#ffffff"></div>
<div class="b" style="left:92px;top:225px;width:1px;height:181px;background:#d9d9d9"></div>
<div class="b" style="left:92px;top:205px;width:1px;height:19px;background:#a6a6a6"></div>
<div class="b" style="left:205px;top:225px;width:1px;height:181px;background:#d9d9d9"></div>
<div class="b" style="left:205px;top:205px;width:1px;height:19px;background:#a6a6a6"></div>
<div class="b" style="left:234px;top:225px;width:1px;height:181px;background:#d9d9d9"></div>
<div class="b" style="left:234px;top:205px;width:1px;height:19px;background:#a6a6a6"></div>
<div class="b" style="left:298px;top:225px;width:1px;height:181px;background:#d9d9d9"></div>
<div class="b" style="left:298px;top:205px;width:1px;height:19px;background:#a6a6a6"></div>
<div class="b" style="left:408px;top:225px;width:1px;height:181px;background:#d9d9d9"></div>
<div class="b" style="left:408px;top:205px;width:1px;height:19px;background:#a6a6a6"></div>
<div class="b" style="left:541px;top:225px;width:1px;height:181px;background:#d9d9d9"></div>
<div class="b" style="left:541px;top:205px;width:1px;height:19px;background:#a6a6a6"></div>
<div class="b" style="left:691px;top:225px;width:1px;height:181px;background:#d9d9d9"></div>
<div class="b" style="left:691px;top:205px;width:1px;height:19px;background:#a6a6a6"></div>
<div class="b" style="left:755px;top:225px;width:1px;height:181px;background:#d9d9d9"></div>
<div class="b" style="left:755px;top:205px;width:1px;height:19px;background:#a6a6a6"></div>
<div class="b" style="left:819px;top:225px;width:1px;height:181px;background:#d9d9d9"></div>
<div class="b" style="left:819px;top:205px;width:1px;height:19px;background:#a6a6a6"></div>
<div class="b" style="left:883px;top:225px;width:1px;height:181px;background:#d9d9d9"></div>
<div class="b" style="left:883px;top:205px;width:1px;height:19px;background:#a6a6a6"></div>
<div class="b" style="left:947px;top:225px;width:1px;height:181px;background:#d9d9d9"></div>
<div class="b" style="left:947px;top:205px;width:1px;height:19px;background:#a6a6a6"></div>
<div class="b" style="left:1011px;top:225px;width:1px;height:181px;background:#d9d9d9"></div>
<div class="b" style="left:1011px;top:205px;width:1px;height:19px;background:#a6a6a6"></div>
<div class="b" style="left:1075px;top:225px;width:1px;height:181px;background:#d9d9d9"></div>
<div class="b" style="left:1075px;top:205px;width:1px;height:19px;background:#a6a6a6"></div>
<div class="b" style="left:25px;top:243px;width:1072px;height:1px;background:#d9d9d9"></div>
<div class="b" style="left:0px;top:243px;width:24px;height:1px;background:#a6a6a6"></div>
<div class="b" style="left:25px;top:262px;width:1072px;height:1px;background:#d9d9d9"></div>
<div class="b" style="left:0px;top:262px;width:24px;height:1px;background:#a6a6a6"></div>
<div class="b" style="left:25px;top:281px;width:1072px;height:1px;background:#d9d9d9"></div>
<div class="b" style="left:0px;top:281px;width:24px;height:1px;background:#a6a6a6"></div>
<div class="b" style="left:25px;top:300px;width:1072px;height:1px;background:#d9d9d9"></div>
<div class="b" style="left:0px;top:300px;width:24px;height:1px;background:#a6a6a6"></div>
<div class="b" style="left:25px;top:319px;width:1072px;height:1px;background:#d9d9d9"></div>
<div class="b" style="left:0px;top:319px;width:24px;height:1px;background:#a6a6a6"></div>
<div class="b" style="left:25px;top:338px;width:1072px;height:1px;background:#d9d9d9"></div>
<div class="b" style="left:0px;top:338px;width:24px;height:1px;background:#a6a6a6"></div>
<div class="b" style="left:25px;top:357px;width:1072px;height:1px;background:#d9d9d9"></div>
<div class="b" style="left:0px;top:357px;width:24px;height:1px;background:#a6a6a6"></div>
<div class="b" style="left:25px;top:376px;width:1072px;height:1px;background:#d9d9d9"></div>
<div class="b" style="left:0px;top:376px;width:24px;height:1px;background:#a6a6a6"></div>
<div class="b" style="left:25px;top:395px;width:1072px;height:1px;background:#d9d9d9"></div>
<div class="b" style="left:0px;top:395px;width:24px;height:1px;background:#a6a6a6"></div>
<div class="b" style="left:25px;top:414px;width:1072px;height:1px;background:#d9d9d9"></div>
<div class="b" style="left:0px;top:414px;width:24px;height:1px;background:#a6a6a6"></div>
<div class="b" style="left:24px;top:205px;width:1px;height:201px;background:#a6a6a6"></div>
<div class="b" style="left:0px;top:224px;width:1097px;height:1px;background:#a6a6a6"></div>
<div class="b" style="left:542px;top:205px;width:149px;height:17px;background:#292929"></div>
<div class="b" style="left:542px;top:222px;width:149px;height:2px;background:#1e6b40"></div>
<div class="b" style="left:0px;top:320px;width:23px;height:18px;background:#292929"></div>
<div class="b" style="left:23px;top:320px;width:2px;height:18px;background:#1e6b40"></div>
<svg class="b" style="left:4px;top:208px;" width="18" height="14" viewBox="0 0 18 14"><path d="M17,0.5V13.5H3.5Z" fill="#e6e6e6"/></svg>
<div class="t" style="left:54.28px;top:208.74px;font-size:12.60px;line-height:12.60px;font-weight:normal;color:#f2f2f2;transform:scaleX(1.000);">A</div>
<div class="t" style="left:144.81px;top:208.74px;font-size:12.60px;line-height:12.60px;font-weight:normal;color:#f2f2f2;transform:scaleX(1.000);">B</div>
<div class="t" style="left:215.46px;top:208.74px;font-size:12.60px;line-height:12.60px;font-weight:normal;color:#f2f2f2;transform:scaleX(1.000);">C</div>
<div class="t" style="left:261.96px;top:208.74px;font-size:12.60px;line-height:12.60px;font-weight:normal;color:#f2f2f2;transform:scaleX(1.000);">D</div>
<div class="t" style="left:349.31px;top:208.74px;font-size:12.60px;line-height:12.60px;font-weight:normal;color:#f2f2f2;transform:scaleX(1.000);">E</div>
<div class="t" style="left:471.16px;top:208.74px;font-size:12.60px;line-height:12.60px;font-weight:normal;color:#f2f2f2;transform:scaleX(1.000);">F</div>
<div class="t" style="left:611.59px;top:208.74px;font-size:12.60px;line-height:12.60px;font-weight:normal;color:#f2f2f2;transform:scaleX(1.000);">G</div>
<div class="t" style="left:718.96px;top:208.74px;font-size:12.60px;line-height:12.60px;font-weight:normal;color:#f2f2f2;transform:scaleX(1.000);">H</div>
<div class="t" style="left:785.74px;top:208.74px;font-size:12.60px;line-height:12.60px;font-weight:normal;color:#f2f2f2;transform:scaleX(1.000);">I</div>
<div class="t" style="left:848.35px;top:208.74px;font-size:12.60px;line-height:12.60px;font-weight:normal;color:#f2f2f2;transform:scaleX(1.000);">J</div>
<div class="t" style="left:911.31px;top:208.74px;font-size:12.60px;line-height:12.60px;font-weight:normal;color:#f2f2f2;transform:scaleX(1.000);">K</div>
<div class="t" style="left:976.00px;top:208.74px;font-size:12.60px;line-height:12.60px;font-weight:normal;color:#f2f2f2;transform:scaleX(1.000);">L</div>
<div class="t" style="left:1038.24px;top:208.74px;font-size:12.60px;line-height:12.60px;font-weight:normal;color:#f2f2f2;transform:scaleX(1.000);">M</div>
<div class="t" style="left:8.40px;top:228.43px;font-size:13.20px;line-height:13.20px;font-weight:normal;color:#f2f2f2;transform:scaleX(0.900);">1</div>
<div class="t" style="left:8.40px;top:247.43px;font-size:13.20px;line-height:13.20px;font-weight:normal;color:#f2f2f2;transform:scaleX(0.900);">2</div>
<div class="t" style="left:8.40px;top:266.43px;font-size:13.20px;line-height:13.20px;font-weight:normal;color:#f2f2f2;transform:scaleX(0.900);">3</div>
<div class="t" style="left:8.40px;top:285.43px;font-size:13.20px;line-height:13.20px;font-weight:normal;color:#f2f2f2;transform:scaleX(0.900);">4</div>
<div class="t" style="left:8.40px;top:304.43px;font-size:13.20px;line-height:13.20px;font-weight:normal;color:#f2f2f2;transform:scaleX(0.900);">5</div>
<div class="t" style="left:8.40px;top:323.43px;font-size:13.20px;line-height:13.20px;font-weight:normal;color:#f2f2f2;transform:scaleX(0.900);">6</div>
<div class="t" style="left:8.40px;top:342.43px;font-size:13.20px;line-height:13.20px;font-weight:normal;color:#f2f2f2;transform:scaleX(0.900);">7</div>
<div class="t" style="left:8.40px;top:361.43px;font-size:13.20px;line-height:13.20px;font-weight:normal;color:#f2f2f2;transform:scaleX(0.900);">8</div>
<div class="t" style="left:8.40px;top:380.43px;font-size:13.20px;line-height:13.20px;font-weight:normal;color:#f2f2f2;transform:scaleX(0.900);">9</div>
<div class="t" style="left:5.11px;top:399.43px;font-size:13.20px;line-height:13.20px;font-weight:normal;color:#f2f2f2;transform:scaleX(0.900);">10</div>
<div class="t" style="left:27.60px;top:228.57px;font-size:12.80px;line-height:12.80px;font-weight:normal;color:#000;transform:scaleX(1.035);-webkit-text-stroke:0.12px #000">RecordNo</div>
<div class="t" style="left:95.80px;top:228.57px;font-size:12.80px;line-height:12.80px;font-weight:normal;color:#000;transform:scaleX(1.132);-webkit-text-stroke:0.12px #000">endtime</div>
<div class="t" style="left:208.00px;top:228.57px;font-size:12.80px;line-height:12.80px;font-weight:normal;color:#000;transform:scaleX(1.015);-webkit-text-stroke:0.12px #000">age</div>
<div class="t" style="left:237.10px;top:228.57px;font-size:12.80px;line-height:12.80px;font-weight:normal;color:#000;transform:scaleX(1.091);-webkit-text-stroke:0.12px #000">gender</div>
<div class="t" style="left:301.30px;top:228.57px;font-size:12.80px;line-height:12.80px;font-weight:normal;color:#000;transform:scaleX(1.083);-webkit-text-stroke:0.12px #000">household_size</div>
<div class="t" style="left:412.00px;top:228.57px;font-size:12.80px;line-height:12.80px;font-weight:normal;color:#000;transform:scaleX(1.102);-webkit-text-stroke:0.12px #000">household_children</div>
<div class="t" style="left:544.40px;top:228.57px;font-size:12.80px;line-height:12.80px;font-weight:normal;color:#000;transform:scaleX(1.109);-webkit-text-stroke:0.12px #000">employment_status</div>
<div class="t" style="left:694.20px;top:228.57px;font-size:12.80px;line-height:12.80px;font-weight:normal;color:#000;transform:scaleX(0.980);-webkit-text-stroke:0.12px #000">vac_1</div>
<div class="t" style="left:758.40px;top:228.57px;font-size:12.80px;line-height:12.80px;font-weight:normal;color:#000;transform:scaleX(0.971);-webkit-text-stroke:0.12px #000">vac2_1</div>
<div class="t" style="left:822.40px;top:228.57px;font-size:12.80px;line-height:12.80px;font-weight:normal;color:#000;transform:scaleX(0.971);-webkit-text-stroke:0.12px #000">vac2_2</div>
<div class="t" style="left:886.50px;top:228.57px;font-size:12.80px;line-height:12.80px;font-weight:normal;color:#000;transform:scaleX(0.971);-webkit-text-stroke:0.12px #000">vac2_3</div>
<div class="t" style="left:950.30px;top:228.57px;font-size:12.80px;line-height:12.80px;font-weight:normal;color:#000;transform:scaleX(0.971);-webkit-text-stroke:0.12px #000">vac2_6</div>
<div class="t" style="left:1014.10px;top:228.57px;font-size:12.80px;line-height:12.80px;font-weight:normal;color:#000;transform:scaleX(0.980);-webkit-text-stroke:0.12px #000">vac_3</div>
<div class="t" style="left:68.59px;top:247.57px;font-size:12.80px;line-height:12.80px;font-weight:normal;color:#000;transform:scaleX(0.992);-webkit-text-stroke:0.12px #000">310</div>
<div class="t" style="left:114.40px;top:247.57px;font-size:12.80px;line-height:12.80px;font-weight:normal;color:#000;transform:scaleX(1.073);-webkit-text-stroke:0.12px #000">1/4/2020</div>
<div class="t" style="left:172.00px;top:247.57px;font-size:12.80px;line-height:12.80px;font-weight:normal;color:#000;transform:scaleX(0.964);-webkit-text-stroke:0.12px #000">16:12</div>
<div class="t" style="left:217.70px;top:247.57px;font-size:12.80px;line-height:12.80px;font-weight:normal;color:#000;transform:scaleX(0.992);-webkit-text-stroke:0.12px #000">44</div>
<div class="t" style="left:237.10px;top:247.57px;font-size:12.80px;line-height:12.80px;font-weight:normal;color:#000;transform:scaleX(1.084);-webkit-text-stroke:0.12px #000">Male</div>
<div class="t" style="left:398.95px;top:247.57px;font-size:12.80px;line-height:12.80px;font-weight:normal;color:#000;transform:scaleX(0.992);-webkit-text-stroke:0.12px #000">2</div>
<div class="t" style="left:531.55px;top:247.57px;font-size:12.80px;line-height:12.80px;font-weight:normal;color:#000;transform:scaleX(0.992);-webkit-text-stroke:0.12px #000">0</div>
<div class="t" style="left:69.54px;top:266.57px;font-size:12.80px;line-height:12.80px;font-weight:normal;color:#000;transform:scaleX(0.992);-webkit-text-stroke:0.12px #000">311</div>
<div class="t" style="left:114.40px;top:266.57px;font-size:12.80px;line-height:12.80px;font-weight:normal;color:#000;transform:scaleX(1.073);-webkit-text-stroke:0.12px #000">1/4/2020</div>
<div class="t" style="left:172.00px;top:266.57px;font-size:12.80px;line-height:12.80px;font-weight:normal;color:#000;transform:scaleX(0.964);-webkit-text-stroke:0.12px #000">16:12</div>
<div class="t" style="left:217.70px;top:266.57px;font-size:12.80px;line-height:12.80px;font-weight:normal;color:#000;transform:scaleX(0.992);-webkit-text-stroke:0.12px #000">66</div>
<div class="t" style="left:237.10px;top:266.57px;font-size:12.80px;line-height:12.80px;font-weight:normal;color:#000;transform:scaleX(1.084);-webkit-text-stroke:0.12px #000">Male</div>
<div class="t" style="left:398.95px;top:266.57px;font-size:12.80px;line-height:12.80px;font-weight:normal;color:#000;transform:scaleX(0.992);-webkit-text-stroke:0.12px #000">1</div>
<div class="t" style="left:531.55px;top:266.57px;font-size:12.80px;line-height:12.80px;font-weight:normal;color:#000;transform:scaleX(0.992);-webkit-text-stroke:0.12px #000">0</div>
<div class="t" style="left:68.59px;top:285.57px;font-size:12.80px;line-height:12.80px;font-weight:normal;color:#000;transform:scaleX(0.992);-webkit-text-stroke:0.12px #000">312</div>
<div class="t" style="left:114.40px;top:285.57px;font-size:12.80px;line-height:12.80px;font-weight:normal;color:#000;transform:scaleX(1.073);-webkit-text-stroke:0.12px #000">1/4/2020</div>
<div class="t" style="left:172.00px;top:285.57px;font-size:12.80px;line-height:12.80px;font-weight:normal;color:#000;transform:scaleX(0.964);-webkit-text-stroke:0.12px #000">16:13</div>
<div class="t" style="left:217.70px;top:285.57px;font-size:12.80px;line-height:12.80px;font-weight:normal;color:#000;transform:scaleX(0.992);-webkit-text-stroke:0.12px #000">22</div>
<div class="t" style="left:237.10px;top:285.57px;font-size:12.80px;line-height:12.80px;font-weight:normal;color:#000;transform:scaleX(1.084);-webkit-text-stroke:0.12px #000">Male</div>
<div class="t" style="left:398.95px;top:285.57px;font-size:12.80px;line-height:12.80px;font-weight:normal;color:#000;transform:scaleX(0.992);-webkit-text-stroke:0.12px #000">3</div>
<div class="t" style="left:531.55px;top:285.57px;font-size:12.80px;line-height:12.80px;font-weight:normal;color:#000;transform:scaleX(0.992);-webkit-text-stroke:0.12px #000">1</div>
<div class="t" style="left:68.59px;top:304.57px;font-size:12.80px;line-height:12.80px;font-weight:normal;color:#000;transform:scaleX(0.992);-webkit-text-stroke:0.12px #000">313</div>
<div class="t" style="left:114.40px;top:304.57px;font-size:12.80px;line-height:12.80px;font-weight:normal;color:#000;transform:scaleX(1.073);-webkit-text-stroke:0.12px #000">1/4/2020</div>
<div class="t" style="left:172.00px;top:304.57px;font-size:12.80px;line-height:12.80px;font-weight:normal;color:#000;transform:scaleX(0.964);-webkit-text-stroke:0.12px #000">16:16</div>
<div class="t" style="left:217.70px;top:304.57px;font-size:12.80px;line-height:12.80px;font-weight:normal;color:#000;transform:scaleX(0.992);-webkit-text-stroke:0.12px #000">45</div>
<div class="t" style="left:237.10px;top:304.57px;font-size:12.80px;line-height:12.80px;font-weight:normal;color:#000;transform:scaleX(1.084);-webkit-text-stroke:0.12px #000">Male</div>
<div class="t" style="left:398.95px;top:304.57px;font-size:12.80px;line-height:12.80px;font-weight:normal;color:#000;transform:scaleX(0.992);-webkit-text-stroke:0.12px #000">3</div>
<div class="t" style="left:531.55px;top:304.57px;font-size:12.80px;line-height:12.80px;font-weight:normal;color:#000;transform:scaleX(0.992);-webkit-text-stroke:0.12px #000">1</div>
<div class="t" style="left:68.59px;top:323.57px;font-size:12.80px;line-height:12.80px;font-weight:normal;color:#000;transform:scaleX(0.992);-webkit-text-stroke:0.12px #000">314</div>
<div class="t" style="left:114.40px;top:323.57px;font-size:12.80px;line-height:12.80px;font-weight:normal;color:#000;transform:scaleX(1.073);-webkit-text-stroke:0.12px #000">1/4/2020</div>
<div class="t" style="left:172.00px;top:323.57px;font-size:12.80px;line-height:12.80px;font-weight:normal;color:#000;transform:scaleX(0.964);-webkit-text-stroke:0.12px #000">16:21</div>
<div class="t" style="left:217.70px;top:323.57px;font-size:12.80px;line-height:12.80px;font-weight:normal;color:#000;transform:scaleX(0.992);-webkit-text-stroke:0.12px #000">42</div>
<div class="t" style="left:237.60px;top:323.57px;font-size:12.80px;line-height:12.80px;font-weight:normal;color:#000;transform:scaleX(1.040);-webkit-text-stroke:0.12px #000">Female</div>
<div class="t" style="left:398.95px;top:323.57px;font-size:12.80px;line-height:12.80px;font-weight:normal;color:#000;transform:scaleX(0.992);-webkit-text-stroke:0.12px #000">3</div>
<div class="t" style="left:531.55px;top:323.57px;font-size:12.80px;line-height:12.80px;font-weight:normal;color:#000;transform:scaleX(0.992);-webkit-text-stroke:0.12px #000">1</div>
<div class="t" style="left:68.59px;top:342.57px;font-size:12.80px;line-height:12.80px;font-weight:normal;color:#000;transform:scaleX(0.992);-webkit-text-stroke:0.12px #000">315</div>
<div class="t" style="left:114.40px;top:342.57px;font-size:12.80px;line-height:12.80px;font-weight:normal;color:#000;transform:scaleX(1.073);-webkit-text-stroke:0.12px #000">1/4/2020</div>
<div class="t" style="left:172.00px;top:342.57px;font-size:12.80px;line-height:12.80px;font-weight:normal;color:#000;transform:scaleX(0.964);-webkit-text-stroke:0.12px #000">16:27</div>
<div class="t" style="left:217.70px;top:342.57px;font-size:12.80px;line-height:12.80px;font-weight:normal;color:#000;transform:scaleX(0.992);-webkit-text-stroke:0.12px #000">50</div>
<div class="t" style="left:237.10px;top:342.57px;font-size:12.80px;line-height:12.80px;font-weight:normal;color:#000;transform:scaleX(1.084);-webkit-text-stroke:0.12px #000">Male</div>
<div class="t" style="left:398.95px;top:342.57px;font-size:12.80px;line-height:12.80px;font-weight:normal;color:#000;transform:scaleX(0.992);-webkit-text-stroke:0.12px #000">4</div>
<div class="t" style="left:531.55px;top:342.57px;font-size:12.80px;line-height:12.80px;font-weight:normal;color:#000;transform:scaleX(0.992);-webkit-text-stroke:0.12px #000">2</div>
<div class="t" style="left:68.59px;top:361.57px;font-size:12.80px;line-height:12.80px;font-weight:normal;color:#000;transform:scaleX(0.992);-webkit-text-stroke:0.12px #000">316</div>
<div class="t" style="left:114.40px;top:361.57px;font-size:12.80px;line-height:12.80px;font-weight:normal;color:#000;transform:scaleX(1.073);-webkit-text-stroke:0.12px #000">1/4/2020</div>
<div class="t" style="left:172.00px;top:361.57px;font-size:12.80px;line-height:12.80px;font-weight:normal;color:#000;transform:scaleX(0.964);-webkit-text-stroke:0.12px #000">16:31</div>
<div class="t" style="left:217.70px;top:361.57px;font-size:12.80px;line-height:12.80px;font-weight:normal;color:#000;transform:scaleX(0.992);-webkit-text-stroke:0.12px #000">48</div>
<div class="t" style="left:237.10px;top:361.57px;font-size:12.80px;line-height:12.80px;font-weight:normal;color:#000;transform:scaleX(1.084);-webkit-text-stroke:0.12px #000">Male</div>
<div class="t" style="left:398.95px;top:361.57px;font-size:12.80px;line-height:12.80px;font-weight:normal;color:#000;transform:scaleX(0.992);-webkit-text-stroke:0.12px #000">3</div>
<div class="t" style="left:531.55px;top:361.57px;font-size:12.80px;line-height:12.80px;font-weight:normal;color:#000;transform:scaleX(0.992);-webkit-text-stroke:0.12px #000">0</div>
<div class="t" style="left:68.59px;top:380.57px;font-size:12.80px;line-height:12.80px;font-weight:normal;color:#000;transform:scaleX(0.992);-webkit-text-stroke:0.12px #000">317</div>
<div class="t" style="left:114.40px;top:380.57px;font-size:12.80px;line-height:12.80px;font-weight:normal;color:#000;transform:scaleX(1.073);-webkit-text-stroke:0.12px #000">1/4/2020</div>
<div class="t" style="left:172.00px;top:380.57px;font-size:12.80px;line-height:12.80px;font-weight:normal;color:#000;transform:scaleX(0.964);-webkit-text-stroke:0.12px #000">16:31</div>
<div class="t" style="left:217.70px;top:380.57px;font-size:12.80px;line-height:12.80px;font-weight:normal;color:#000;transform:scaleX(0.992);-webkit-text-stroke:0.12px #000">40</div>
<div class="t" style="left:237.60px;top:380.57px;font-size:12.80px;line-height:12.80px;font-weight:normal;color:#000;transform:scaleX(1.040);-webkit-text-stroke:0.12px #000">Female</div>
<div class="t" style="left:398.95px;top:380.57px;font-size:12.80px;line-height:12.80px;font-weight:normal;color:#000;transform:scaleX(0.992);-webkit-text-stroke:0.12px #000">2</div>
<div class="t" style="left:531.55px;top:380.57px;font-size:12.80px;line-height:12.80px;font-weight:normal;color:#000;transform:scaleX(0.992);-webkit-text-stroke:0.12px #000">0</div>
<div class="t" style="left:68.59px;top:399.57px;font-size:12.80px;line-height:12.80px;font-weight:normal;color:#000;transform:scaleX(0.992);-webkit-text-stroke:0.12px #000">318</div>
<div class="t" style="left:114.40px;top:399.57px;font-size:12.80px;line-height:12.80px;font-weight:normal;color:#000;transform:scaleX(1.073);-webkit-text-stroke:0.12px #000">1/4/2020</div>
<div class="t" style="left:172.00px;top:399.57px;font-size:12.80px;line-height:12.80px;font-weight:normal;color:#000;transform:scaleX(0.964);-webkit-text-stroke:0.12px #000">16:36</div>
<div class="t" style="left:217.70px;top:399.57px;font-size:12.80px;line-height:12.80px;font-weight:normal;color:#000;transform:scaleX(0.992);-webkit-text-stroke:0.12px #000">67</div>
<div class="t" style="left:237.10px;top:399.57px;font-size:12.80px;line-height:12.80px;font-weight:normal;color:#000;transform:scaleX(1.084);-webkit-text-stroke:0.12px #000">Male</div>
<div class="t" style="left:398.95px;top:399.57px;font-size:12.80px;line-height:12.80px;font-weight:normal;color:#000;transform:scaleX(0.992);-webkit-text-stroke:0.12px #000">2</div>
<div class="t" style="left:531.55px;top:399.57px;font-size:12.80px;line-height:12.80px;font-weight:normal;color:#000;transform:scaleX(0.992);-webkit-text-stroke:0.12px #000">0</div>
<div class="b" style="left:540px;top:318px;width:153px;height:22px;border:2px solid #1e6b40;box-sizing:border-box"></div>
<div class="b" style="left:687px;top:334px;width:8px;height:8px;background:#fff"></div>
<div class="b" style="left:689px;top:336px;width:5px;height:5px;background:#1e6b40"></div>
</body></html>
